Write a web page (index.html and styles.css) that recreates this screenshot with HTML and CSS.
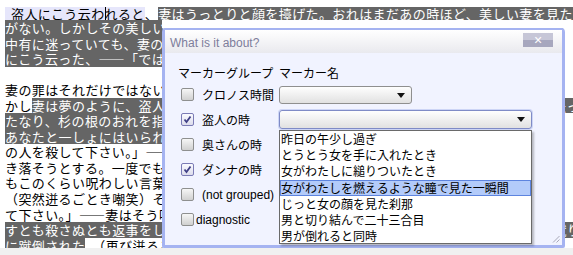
FILE: index.html
```html
<!DOCTYPE html>
<html lang="ja">
<head>
    <meta charset="UTF-8">
    <title>藪の中 - マーカー</title>
    <link rel="stylesheet" href="styles.css">
</head>
<body>
    <div class="page">
        <div class="doc">
            <div class="ln first"><span class="hl">盗人にこう云わ<i class="caret"></i>れると</span>、<span class="mk">妻はうっとりと顔を擡げた。おれはまだあの時ほど、美しい妻を見た事</span></div>
            <div class="ln"><span class="mk">がない。しかしその美しい妻は、現在縛られたおれを前に、何と盗人に返事をしたか？おれは</span></div>
            <div class="ln"><span class="mk">中有に迷っていても、妻の返事を思い出すごとに、嗔恚に燃えなかったためしはない。妻は確か</span></div>
            <div class="ln"><span class="mk">にこう云った、――「ではどこへでもつれて行って下さい。」</span>（長き沈黙）</div>
            <div class="ln">&nbsp;</div>
            <div class="ln">妻の罪はそれだけではない。それだけならばこの闇の中に、いまほどおれも苦しみはしまい。し</div>
            <div class="ln wide">かし<span class="mk">妻は夢のように、盗人に手をとられながら、藪の外へ行こうとすると、たちまち顔色を失っ</span></div>
            <div class="ln"><span class="mk">たなり、杉の根のおれを指さした。「あの人を殺して下さい。わたしはあの人が生きていては、</span></div>
            <div class="ln"><span class="mk">あなたと一しょにはいられません。」</span>――妻は気が狂ったように、何度もこう叫び立てた。「あ</div>
            <div class="ln">の人を殺して下さい。」――この言葉は嵐のように、今でも遠い闇の底へ、まっ逆様におれを吹</div>
            <div class="ln">き落そうとする。一度でもこのくらい憎むべき言葉が、人間の口を出た事があろうか？一度で</div>
            <div class="ln">もこのくらい呪わしい言葉が、人間の耳に触れた事があろうか？一度でもこのくらい、――</div>
            <div class="ln">（突然迸るごとき嘲笑）その言葉を聞いた時は、盗人さえ色を失ってしまった。「あの人を殺し</div>
            <div class="ln">て下さい。」――妻はそう叫びながら、盗人の腕に縋っている。<span class="mk">盗人はじっと妻を見たまま、殺</span></div>
            <div class="ln wide"><span class="mk">すとも殺さぬとも返事をしない。――と思うか思わない内に、妻は竹の落葉の上へ、ただ一蹴り</span></div>
            <div class="ln"><span class="mk">に蹴倒された</span>。（再び迸るごとき嘲笑）</div>
        </div>

        <!-- マーカー選択ダイアログ -->
        <div class="dlg">
            <div class="dlg-title">
                <span>What is it about?</span>
                <button class="dlg-close">×</button>
            </div>
            <div class="dlg-body">
                <div class="grid">
                    <div class="hd">マーカーグループ</div>
                    <div class="hd">マーカー名</div>

                    <label class="grp"><span class="cb"></span>クロノス時間</label>
                    <div><span class="dd short"></span></div>

                    <label class="grp"><span class="cb on"><svg viewBox="0 0 11 11" width="11" height="11"><path d="M2.5 5.5 L4.5 8 L8.5 2.5" fill="none" stroke="#3f3f86" stroke-width="1.8"/></svg></span>盗人の時</label>
                    <div class="combo">
                        <span class="dd focus"></span>
                        <ul class="list">
                            <li>昨日の午少し過ぎ</li>
                            <li>とうとう女を手に入れたとき</li>
                            <li>女がわたしに縋りついたとき</li>
                            <li class="cur">女がわたしを燃えるような瞳で見た一瞬間</li>
                            <li>じっと女の顔を見た刹那</li>
                            <li>男と切り結んで二十三合目</li>
                            <li>男が倒れると同時</li>
                        </ul>
                    </div>

                    <label class="grp"><span class="cb"></span>奥さんの時</label>
                    <div></div>

                    <label class="grp"><span class="cb on"><svg viewBox="0 0 11 11" width="11" height="11"><path d="M2.5 5.5 L4.5 8 L8.5 2.5" fill="none" stroke="#3f3f86" stroke-width="1.8"/></svg></span>ダンナの時</label>
                    <div></div>

                    <label class="grp"><span class="cb"></span>(not grouped)</label>
                    <div></div>

                    <label class="grp tight"><span class="cb"></span>diagnostic</label>
                    <div></div>
                </div>
                <span class="grip"><svg viewBox="0 0 8 8" width="8" height="8"><path d="M7.5 1 L1 7.5 M7.5 4.5 L4.5 7.5" stroke="#a8a8b8" stroke-width="1"/></svg></span>
            </div>
        </div>
    </div>
    <div class="bottom"></div>
</body>
</html>
```

FILE: styles.css
```css
* {
    box-sizing: border-box;
}

body {
    margin: 0;
    background: #ffffff;
}

.page {
    position: relative;
    height: 248px;
    overflow: hidden;
    padding: 7px 0 0 5px;
    font-family: "Noto Sans CJK JP", sans-serif;
    font-size: 13px;
    letter-spacing: 0.4px;
    color: #000;
}

/* 本文 */
.ln {
    width: 555px;
    height: 15.55px;
    line-height: 15.55px;
    white-space: nowrap;
    overflow: hidden;
}

.ln.first {
    width: auto;
    height: 13px;
    line-height: 13px;
}

.ln.wide {
    width: auto;
    overflow: visible;
}

.mk,
.hl {
    display: inline-block;
    vertical-align: top;
}

.mk {
    background: #656565;
    color: #ffffff;
}

.hl {
    background: #e6e6fb;
    padding-left: 6px;
}

.caret {
    display: inline-block;
    width: 1px;
    height: 13px;
    margin-right: -1px;
    background: #000;
    vertical-align: top;
}

.bottom {
    height: 7px;
    background: #f0f0f0;
}

/* ダイアログ */
.dlg {
    position: absolute;
    left: 162px;
    top: 27px;
    width: 403px;
    height: 221px;
    border: 3px solid #a5b3f1;
    border-radius: 5px 5px 2px 2px;
    background: #f1f3ff;
    font-family: "Liberation Sans", "Noto Sans CJK JP", sans-serif;
    font-size: 12px;
    letter-spacing: 0;
    color: #000;
}

/* ダイアログ上の白い余白 */
.dlg::before {
    content: "";
    position: absolute;
    left: -3px;
    right: -3px;
    top: -10px;
    height: 8px;
    background: #ffffff;
}

.dlg-title {
    display: flex;
    justify-content: space-between;
    align-items: flex-start;
    height: 23px;
    padding: 3px 9px 0 5px;
    background: linear-gradient(#ffffff, #e9e9ee);
    color: #7d7d9b;
}

.dlg-title span {
    padding-top: 3px;
}

.dlg-close {
    width: 30px;
    height: 14px;
    padding: 0;
    border: none;
    background: linear-gradient(#c6c6d7 50%, #a7a7be 50%);
    color: #ffffff;
    font-family: "Liberation Sans", sans-serif;
    font-size: 14px;
    line-height: 14px;
}

.dlg-body {
    position: relative;
    height: 192px;
    padding: 13px 0 0 13px;
}

.grid {
    display: grid;
    grid-template-columns: 101px 253px;
    grid-template-rows: 16px repeat(6, 25px);
    align-items: center;
}

.hd {
    line-height: 16px;
}

.grp {
    display: flex;
    align-items: center;
}

.cb {
    display: inline-flex;
    align-items: center;
    justify-content: center;
    width: 13px;
    height: 13px;
    margin: 0 8px 0 3px;
    border: 1px solid #8e8f8f;
    border-radius: 2px;
    background: linear-gradient(#f6f6f6, #d0d0d0);
}

.cb.on {
    border-color: #7b7bb5;
    background: linear-gradient(#fbfbff, #dcdcec);
}

.grp.tight .cb {
    margin-right: 2px;
}

.dd {
    position: relative;
    display: block;
    height: 18px;
    border: 1px solid #8f8f8f;
    border-radius: 3px;
    background: linear-gradient(#fefefe, #e1e1e1);
}

.dd::after {
    content: "";
    position: absolute;
    right: 6px;
    top: 6px;
    border-left: 4px solid transparent;
    border-right: 4px solid transparent;
    border-top: 5px solid #111;
}

.dd.short {
    width: 133px;
}

.dd.focus {
    height: 19px;
    border-color: #7f8bc6;
    box-shadow: 0 0 0 1px #cdd5f6;
}

.combo {
    position: relative;
}

.list {
    position: absolute;
    left: 0;
    top: 20px;
    width: 253px;
    height: 114px;
    margin: 0;
    padding: 0;
    list-style: none;
    background: #ffffff;
    border: 1px solid #6a6a6a;
    box-shadow: 2px 2px 2px rgba(0, 0, 0, 0.25);
    font-family: "Noto Sans CJK JP", sans-serif;
    z-index: 2;
}

.list li {
    height: 16.2px;
    padding-left: 1px;
    line-height: 16px;
    white-space: nowrap;
}

.list li.cur {
    background: #b3cbfa;
    outline: 1px solid #5d84df;
    outline-offset: -1px;
}

.grip {
    position: absolute;
    right: 2px;
    bottom: 2px;
    width: 8px;
    height: 8px;
    line-height: 0;
}
```
